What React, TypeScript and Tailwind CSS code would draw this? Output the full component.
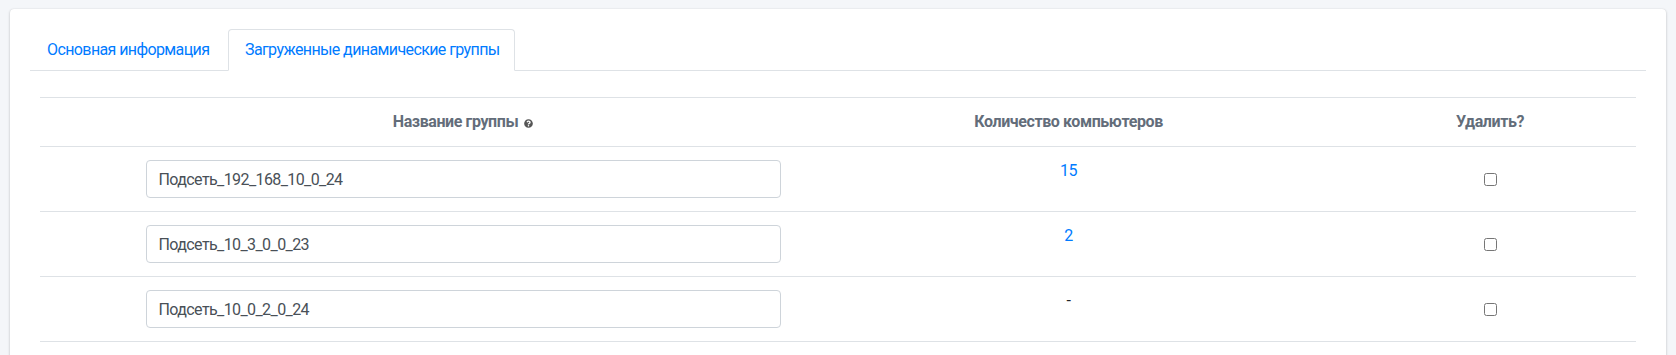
import { FaQuestionCircle } from "react-icons/fa";

interface Row {
    name: string
    count: string
    link: boolean
}

const rows: Row[] = [
    { name: "Подсеть_192_168_10_0_24", count: "15", link: true },
    { name: "Подсеть_10_3_0_0_23", count: "2", link: true },
    { name: "Подсеть_10_0_2_0_24", count: "-", link: false },
];

export default function App() {
    return (
        <div className="h-[355px] overflow-hidden bg-[#f4f6f9] pt-[9px] px-[10px] font-['Roboto',sans-serif] text-[16px] tracking-[-0.6px] text-[#212529]">
            <div className="h-[420px] bg-white rounded-[4px] shadow-[0_0_1px_rgba(0,0,0,0.125),0_1px_3px_rgba(0,0,0,0.2)] p-5">
                {/* tabs */}
                <ul className="flex border-b border-[#dee2e6]">
                    <li className="-mb-px w-[198px]">
                        <a href="#" className="block px-4 py-2 leading-6 border border-transparent text-[#007bff] whitespace-nowrap">
                            Основная информация
                        </a>
                    </li>
                    <li className="-mb-px w-[287px]">
                        <a href="#" className="block px-4 py-2 leading-6 border border-[#dee2e6] border-b-white bg-white rounded-t-[4px] text-[#007bff] whitespace-nowrap">
                            Загруженные динамические группы
                        </a>
                    </li>
                </ul>

                {/* table */}
                <div className="mt-[26px] mx-[10px]">
                    <div className="grid grid-cols-[846px_365px_1fr_292px] h-[50px] border-y border-[#dee2e6] font-bold tracking-[-0.4px] text-[#636d7a]">
                        <div className="flex items-center justify-center gap-[6px]">
                            <span>Название группы</span>
                            <FaQuestionCircle className="w-[9px] h-[9px] text-[#555] mt-[3px]" />
                        </div>
                        <div className="flex items-center justify-center">Количество компьютеров</div>
                        <div />
                        <div className="flex items-center justify-center">Удалить?</div>
                    </div>

                    {rows.map((row) => (
                        <div key={row.name} className="grid grid-cols-[846px_365px_1fr_292px] h-[65px] border-b border-[#dee2e6]">
                            <div className="flex items-center justify-center">
                                <input
                                    type="text"
                                    defaultValue={row.name}
                                    className="w-[635px] h-[38px] px-3 border border-[#ced4da] rounded-[4px] text-[#495057] tracking-[-0.6px] outline-none"
                                />
                            </div>
                            <div className="pt-3 leading-6 text-center">
                                {row.link ? <a href="#" className="text-[#007bff]">{row.count}</a> : <span>{row.count}</span>}
                            </div>
                            <div />
                            <div className="flex items-center justify-center">
                                <input type="checkbox" className="w-[13px] h-[13px] m-0" />
                            </div>
                        </div>
                    ))}
                </div>
            </div>
        </div>
    )
}
